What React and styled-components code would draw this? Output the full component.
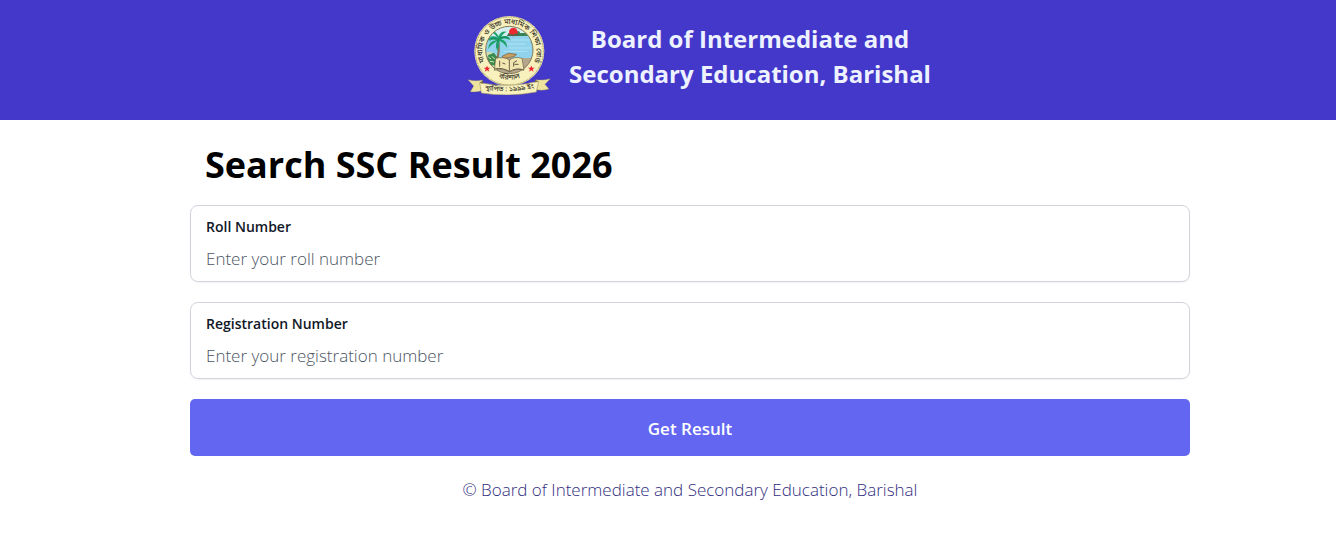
import { useState } from 'react'
import styled, { createGlobalStyle } from 'styled-components'

const fields = [
    {
        id: 'roll',
        label: 'Roll Number',
        placeholder: 'Enter your roll number',
    },
    {
        id: 'registration',
        label: 'Registration Number',
        placeholder: 'Enter your registration number',
    },
]

const Logo = () => (
    <LogoSvg viewBox="24 21 252 240" role="img" aria-label="Barishal Board">
        <defs>
            <clipPath id="scene">
                <circle cx="151" cy="126" r="71" />
            </clipPath>
            <path id="ringTop" d="M 79 166 A 81 81 0 1 1 223 166" />
            <path id="ringBottom" d="M 98 198 A 91 91 0 0 0 204 198" />
            <path id="ribbonText" d="M 76 246 Q 152 256 228 240" />
        </defs>

        {/* outer ring */}
        <circle cx="151" cy="129" r="105" fill="#f6efb9" />
        <circle cx="151" cy="129" r="102" fill="none" stroke="#9a8f52" strokeWidth="3" strokeDasharray="3 2" />
        <circle cx="151" cy="128" r="98" fill="#f8f1bd" />

        {/* river scene with palm and book */}
        <g clipPath="url(#scene)">
            <rect x="78" y="53" width="146" height="40" fill="#d6eff2" />
            <rect x="78" y="84" width="146" height="70" fill="#8fd3ec" />
            <path d="M78 92h60M150 96h70M140 108h60M150 120h66M135 130h70" stroke="#b0e2f2" strokeWidth="3" />
            <path d="M148 75h76v9h-80z" fill="#4d8f55" />
            <path d="M146 84q8 -14 16 -8q4 -16 10 -4q10 -8 12 6q14 -6 20 6z" fill="#368253" />
            <circle cx="163" cy="72" r="13" fill="#ee2a31" />
            <path d="M143 84q9 -10 20 -4q9 -8 18 4z" fill="#54664a" />
            <path d="M78 150h146v50H78z" fill="#b5a68c" />
            <path d="M78 132q20 -4 34 9v58H78z" fill="#cfdab0" />
            <path d="M84 152q2 -14 12 -13q10 -9 15 4q9 3 4 14l-8 15H90z" fill="#378b51" />
            <path d="M88 147l8 6M99 145l8 8M93 160l12 2" stroke="#dce9a7" strokeWidth="3" />
            <path d="M117 94q7 33 -5 67" fill="none" stroke="#8c7454" strokeWidth="6" />
            <path
                d="M119 94Q103 73 80 99Q101 91 112 97Q89 99 87 123Q98 107 117 98Q108 113 115 129Q123 113 121 98Q138 106 143 119Q147 100 126 94Q143 87 155 98Q148 77 126 87Q137 71 145 72Q126 66 119 85Q108 65 95 73Q108 76 119 94Z"
                fill="#1fa36a"
            />
            <path d="M118 91q-19 -3 -27 9M121 91q14 -9 27 -1M119 93q-10 13 -5 27" fill="none" stroke="#087b4e" strokeWidth="2" />
        </g>
        <circle cx="151" cy="126" r="71" fill="none" stroke="#81795b" strokeWidth="3" />
        <path d="M129 145l19 -9l25 3l-8 7l-30 5z" fill="#cda060" stroke="#6c573b" strokeWidth="2" />
        <path d="M110 151q25 -6 41 5q16 -12 38 -5l6 35q-25 -7 -43 6q-20 -14 -46 -5z" fill="#f2e7b0" stroke="#6b6248" strokeWidth="2" />
        <path d="M151 156v34M105 183q26 -6 46 8q20 -13 44 -5" fill="none" stroke="#6b6248" strokeWidth="3" />
        <path d="M122 158v18M130 165l9 3M174 158l-10 6v12M166 169h13" fill="none" stroke="#665b43" strokeWidth="3" />

        {/* stars on both sides */}
        <path id="star" d="M84 173l3 6 7 0-6 5 3 7-7-4-7 4 3-7-6-5 7 0z" fill="#ed2430" />
        <use href="#star" x="133" />

        <RingText fontSize="22">
            <textPath href="#ringTop" startOffset="50%" textAnchor="middle">
                মাধ্যমিক ও উচ্চ মাধ্যমিক শিক্ষা বোর্ড
            </textPath>
        </RingText>
        <RingText fontSize="21">
            <textPath href="#ringBottom" startOffset="50%" textAnchor="middle">
                বরিশাল
            </textPath>
        </RingText>

        {/* ribbon */}
        <path d="M27 215q24 6 43 1l5 30q-21 8 -41 5l10 -17z" fill="#efe3a0" stroke="#8b824f" strokeWidth="1" />
        <path d="M274 212q-22 6 -43 3l-5 29q23 6 44 -1l-12 -14z" fill="#efe3a0" stroke="#8b824f" strokeWidth="1" />
        <path d="M62 224q89 18 177 -4l-7 32q-82 16 -165 3z" fill="#f8f1bd" stroke="#a39a67" strokeWidth="2" />
        <path d="M62 224l10 -7v10zM239 220l-11 -5v8z" fill="#756e49" />
        <RingText fontSize="21">
            <textPath href="#ribbonText" startOffset="50%" textAnchor="middle">
                স্থাপিত : ১৯৯৯ ইং
            </textPath>
        </RingText>
    </LogoSvg>
)

const Field = ({ id, label, placeholder, value, onChange }) => (
    <FieldBox>
        <FieldLabel htmlFor={id}>{label}</FieldLabel>
        <FieldInput
            id={id}
            name={id}
            type="text"
            placeholder={placeholder}
            value={value}
            onChange={onChange}
        />
    </FieldBox>
)

const App = () => {
    const [values, setValues] = useState({ roll: '', registration: '' })

    const getResult = (e) => {
        e.preventDefault()
    }

    return (
        <>
            <GlobalStyle />
            <Header>
                <Logo />
                <BoardName>
                    Board of Intermediate and
                    <br />
                    Secondary Education, Barishal
                </BoardName>
            </Header>

            <Main>
                <Title>Search SSC Result 2026</Title>
                <Form onSubmit={getResult}>
                    {fields.map((field) => (
                        <Field
                            key={field.id}
                            {...field}
                            value={values[field.id]}
                            onChange={(e) =>
                                setValues({ ...values, [field.id]: e.target.value })
                            }
                        />
                    ))}
                    <SubmitButton type="submit">Get Result</SubmitButton>
                </Form>
                <Footer>© Board of Intermediate and Secondary Education, Barishal</Footer>
            </Main>
        </>
    )
}

export default App

const GlobalStyle = createGlobalStyle`
    *, *::before, *::after {
        box-sizing: border-box;
    }

    body {
        margin: 0;
        background: #fff;
        color: #000;
        font-family: 'Segoe UI', 'Open Sans', 'Noto Sans', sans-serif;
        font-size: 17px;
        font-weight: 300;
    }
`

const Header = styled.header`
    display: flex;
    justify-content: center;
    gap: 18px;
    padding: 15px 0 25px 62px;
    background: #4338ca;
`

const LogoSvg = styled.svg`
    width: 84px;
    height: 80px;
    flex-shrink: 0;
`

const RingText = styled.text`
    font-family: 'Noto Sans Bengali', 'Noto Sans', sans-serif;
    font-weight: 500;
    fill: #39352b;
`

const BoardName = styled.h2`
    margin: 6px 0 0;
    color: #eef2ff;
    font-size: 24px;
    font-weight: 700;
    line-height: 35px;
    text-align: center;
`

const Main = styled.main`
    max-width: 1044px;
    margin: 0 auto;
    padding: 20px 0 40px 44px;
`

const Title = styled.h1`
    margin: 0 15px 15px;
    font-size: 36px;
    font-weight: 700;
    line-height: 50px;
`

const Form = styled.form`
    display: flex;
    flex-direction: column;
    gap: 20px;
`

const FieldBox = styled.div`
    display: flex;
    flex-direction: column;
    gap: 8px;
    padding: 11px 15px 9px;
    border: 1px solid #d1d5db;
    border-radius: 8px;
    box-shadow: 0 1px 2px rgba(0, 0, 0, 0.05);
`

const FieldLabel = styled.label`
    color: #111827;
    font-size: 14px;
    font-weight: 600;
    line-height: 20px;
`

const FieldInput = styled.input`
    width: 100%;
    height: 27px;
    padding: 0;
    border: 0;
    outline: none;
    background: transparent;
    color: #111827;
    font-family: inherit;
    font-size: 17px;
    font-weight: inherit;

    &::placeholder {
        color: #4b5563;
    }
`

const SubmitButton = styled.button`
    padding: 16px 15px 14px;
    border: 0;
    border-radius: 5px;
    background: #6366f1;
    color: #fff;
    font-family: inherit;
    font-size: 17px;
    font-weight: 600;
    line-height: 27px;
    cursor: pointer;
`

const Footer = styled.footer`
    margin-top: 20px;
    color: #312e81;
    line-height: 27px;
    text-align: center;
`
